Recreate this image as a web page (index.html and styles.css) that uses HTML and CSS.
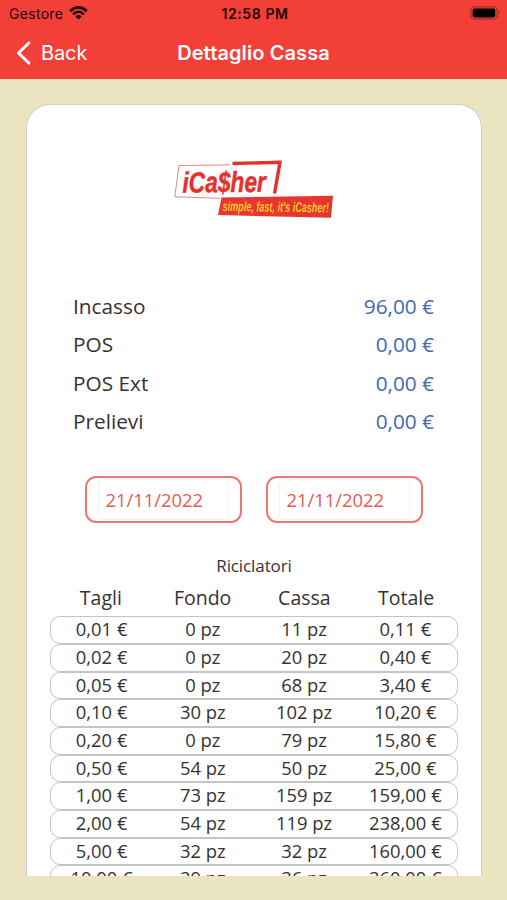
FILE: index.html
```html
<!DOCTYPE html>
<html lang="it">

<head>
    <meta charset="UTF-8">
    <meta name="viewport" content="width=device-width, initial-scale=1.0">
    <title>Dettaglio Cassa</title>
    <link rel="stylesheet" href="styles.css">
</head>

<body>
    <header>
        <div class="status-bar">
            <div class="carrier">
                <span>Gestore</span>
                <svg class="wifi" width="19" height="14" viewBox="0 0 19 14">
                    <path d="M1.2 5.1 Q9.5 -2.4 17.8 5.1" fill="none" stroke="#1c0503" stroke-width="2.8" />
                    <path d="M4.1 8.2 Q9.5 3.3 14.9 8.2" fill="none" stroke="#1c0503" stroke-width="2.6" />
                    <path d="M6.3 10.4 Q9.5 7.6 12.7 10.4 L9.5 13.6 Z" fill="#1c0503" />
                </svg>
            </div>
            <div class="clock">12:58 PM</div>
            <svg class="battery" width="31" height="14" viewBox="0 0 31 14">
                <rect x="0.8" y="0.8" width="26.4" height="12.4" rx="3.6" fill="none" stroke="#a52b25" stroke-width="1.3" />
                <rect x="2.6" y="2.6" width="22.6" height="8.8" rx="1.8" fill="#000" />
                <path d="M28.4 4.8 Q30.6 7 28.4 9.2 Z" fill="#a52b25" />
            </svg>
        </div>
        <nav class="nav-bar">
            <div class="back">
                <svg width="15" height="24" viewBox="0 0 15 24">
                    <path d="M12.8 2 L2.5 12 L12.8 22" fill="none" stroke="#fff" stroke-width="3.1" stroke-linecap="round" stroke-linejoin="round" />
                </svg>
                <span>Back</span>
            </div>
            <h1>Dettaglio Cassa</h1>
        </nav>
    </header>

    <main class="scroll-area">
        <div class="card">
            <svg class="logo" width="160" height="58" viewBox="0 0 160 58">
                <path d="M56 4.9 L5 5.5 L0.8 36.8 L46 38.3" fill="none" stroke="#ee8580" stroke-width="1" />
                <path d="M58.5 3.5 L106 2.3 L100.5 33.5" fill="none" stroke="#e5302c" stroke-width="3.4" />
                <path d="M47.5 37.6 L159 35.8 L157 57.8 L44 55 Z" fill="#e7352f" />
                <text class="logo-name" transform="translate(8.5 32.5) rotate(-0.5) scale(0.78 1)" textLength="107" lengthAdjust="spacingAndGlyphs">iCa$her</text>
                <text class="logo-claim" transform="translate(48.5 51) rotate(0.8) scale(0.8 1)" textLength="133" lengthAdjust="spacingAndGlyphs">simple, fast, it's iCasher!</text>
            </svg>

            <div class="summary">
                <div class="summary-row"><span>Incasso</span><span class="amount">96,00 €</span></div>
                <div class="summary-row"><span>POS</span><span class="amount">0,00 €</span></div>
                <div class="summary-row"><span>POS Ext</span><span class="amount">0,00 €</span></div>
                <div class="summary-row"><span>Prelievi</span><span class="amount">0,00 €</span></div>
            </div>

            <div class="dates">
                <div class="date"><div class="date-field">21/11/2022</div></div>
                <div class="date"><div class="date-field">21/11/2022</div></div>
            </div>

            <h2>Riciclatori</h2>
            <div class="table-head"><span>Tagli</span><span>Fondo</span><span>Cassa</span><span>Totale</span></div>
            <div class="table-body">
                <div class="row"><span>0,01 €</span><span>0 pz</span><span>11 pz</span><span>0,11 €</span></div>
                <div class="row"><span>0,02 €</span><span>0 pz</span><span>20 pz</span><span>0,40 €</span></div>
                <div class="row"><span>0,05 €</span><span>0 pz</span><span>68 pz</span><span>3,40 €</span></div>
                <div class="row"><span>0,10 €</span><span>30 pz</span><span>102 pz</span><span>10,20 €</span></div>
                <div class="row"><span>0,20 €</span><span>0 pz</span><span>79 pz</span><span>15,80 €</span></div>
                <div class="row"><span>0,50 €</span><span>54 pz</span><span>50 pz</span><span>25,00 €</span></div>
                <div class="row"><span>1,00 €</span><span>73 pz</span><span>159 pz</span><span>159,00 €</span></div>
                <div class="row"><span>2,00 €</span><span>54 pz</span><span>119 pz</span><span>238,00 €</span></div>
                <div class="row"><span>5,00 €</span><span>32 pz</span><span>32 pz</span><span>160,00 €</span></div>
                <div class="row"><span>10,00 €</span><span>39 pz</span><span>36 pz</span><span>360,00 €</span></div>
            </div>
        </div>
    </main>
</body>

</html>
```
FILE: styles.css
```css
* {
    box-sizing: border-box;
}

body {
    margin: 0;
    height: 900px;
    overflow: hidden;
    background-color: #eae4c0;
    font-family: "Open Sans", sans-serif;
    color: #333;
}

header {
    height: 79px;
    background-color: #f24038;
    font-family: Inter, sans-serif;
}

/* status bar */
.status-bar {
    display: grid;
    grid-template-columns: 1fr auto 1fr;
    align-items: center;
    height: 27px;
    padding: 0 6px 0 9px;
    color: #1c0503;
    font-size: 14px;
}

.carrier {
    display: flex;
    align-items: center;
    gap: 6px;
    letter-spacing: 0.3px;
}

.wifi {
    margin-top: -2px;
}

.clock {
    font-size: 14px;
    font-weight: 600;
    letter-spacing: 0.6px;
}

.battery {
    justify-self: end;
    margin-top: -1px;
}

/* navigation */
.nav-bar {
    display: grid;
    grid-template-columns: 1fr auto 1fr;
    align-items: center;
    height: 51px;
    padding: 0 16px;
    color: #fff;
}

.back {
    display: flex;
    align-items: center;
    gap: 10px;
    font-size: 20px;
    letter-spacing: -0.1px;
}

h1 {
    margin: 0;
    font-size: 20px;
    font-weight: 600;
    letter-spacing: 0.1px;
}

/* card */
.scroll-area {
    height: 797px;
    padding: 25px 25px 0 26px;
    overflow: hidden;
}

.card {
    display: flex;
    flex-direction: column;
    height: 900px;
    padding: 55px 23px 0;
    background-color: #fff;
    border: 1px solid #cbd0c8;
    border-radius: 24px;
}

.logo {
    align-self: center;
    display: block;
}

.logo-name {
    font: italic 700 29px "Liberation Sans", sans-serif;
    fill: #e5302c;
    stroke: #e5302c;
    stroke-width: 0.5px;
}

.logo-claim {
    font: italic 700 14px "Liberation Sans", sans-serif;
    fill: #ffc52b;
}

.summary {
    margin-top: 70px;
    padding: 0 24px 0 23px;
}

.summary-row {
    display: flex;
    justify-content: space-between;
    height: 38.3px;
    line-height: 37px;
    font-size: 20.8px;
}

.amount {
    color: #4169b8;
}

.dates {
    display: flex;
    justify-content: center;
    gap: 24px;
    margin-top: 35px;
    padding-right: 1px;
}

.date {
    width: 157px;
    height: 47px;
    padding: 1px 11px;
    border: 2px solid #ee7770;
    border-radius: 11px;
}

.date-field {
    height: 41px;
    padding-left: 7px;
    border: 1px solid #f3f3f3;
    border-radius: 5px;
    color: #e85a50;
    font-size: 18.4px;
    line-height: 39px;
}

h2 {
    margin: 31px 0 0;
    text-align: center;
    font-size: 17px;
    font-weight: 400;
    line-height: 24px;
    letter-spacing: -0.1px;
}

.table-head,
.row {
    display: grid;
    grid-template-columns: repeat(4, 1fr);
    text-align: center;
}

.table-head {
    height: 38px;
    padding-right: 1px;
    font-size: 19.5px;
    line-height: 39px;
}

.table-body {
    display: flex;
    flex-direction: column;
}

.row {
    height: 27.7px;
    padding-right: 1px;
    border: 1px solid #c4c4c4;
    border-radius: 10px;
    font-size: 18.4px;
    line-height: 23px;
}
```
